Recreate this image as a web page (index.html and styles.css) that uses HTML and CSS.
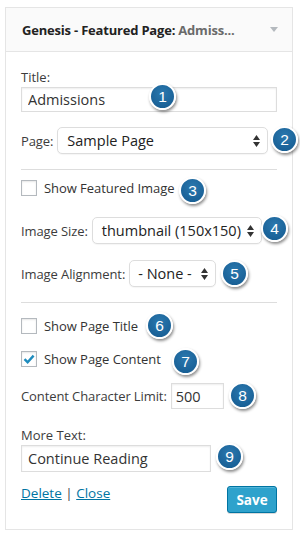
FILE: index.html
```html
<!DOCTYPE html>
<html>
<head>
<meta charset="utf-8">
<link rel="stylesheet" href="styles.css">
</head>
<body>
<div class="widget">
  <div class="widget-top">
    <span class="wt-title">Genesis - Featured Page:<span class="wt-sub"> Admiss...</span></span>
    <svg class="wt-arrow" width="8" height="6" viewBox="0 0 8 6"><path d="M0 0h8L4 5z" fill="#b4b9be"/></svg>
  </div>
  <div class="widget-inside">
    <div class="row r-title">
      <label class="lbl">Title:</label>
      <div class="field-wrap">
        <input class="txt wide" type="text" value="Admissions">
        <span class="badge b1">1</span>
      </div>
    </div>

    <div class="row inline r-page">
      <label class="lbl">Page:</label>
      <div class="sel s-page"><span>Sample Page</span><svg class="updn" width="7" height="12" viewBox="0 0 7 12"><path d="M3.5 0L7 5H0z M0 7h7L3.5 12z" fill="#333"/></svg></div>
      <span class="badge b2">2</span>
    </div>

    <hr class="sep sep1">

    <div class="row inline r-feat">
      <span class="cb"></span><span class="cbl">Show Featured Image</span>
      <span class="badge b3">3</span>
    </div>

    <div class="row inline r-size">
      <label class="lbl">Image Size:</label>
      <div class="sel s-size"><span>thumbnail (150x150)</span><svg class="updn" width="7" height="12" viewBox="0 0 7 12"><path d="M3.5 0L7 5H0z M0 7h7L3.5 12z" fill="#333"/></svg></div>
      <span class="badge b4">4</span>
    </div>

    <div class="row inline r-align">
      <label class="lbl">Image Alignment:</label>
      <div class="sel s-align"><span>- None -</span><svg class="updn" width="7" height="12" viewBox="0 0 7 12"><path d="M3.5 0L7 5H0z M0 7h7L3.5 12z" fill="#333"/></svg></div>
      <span class="badge b5">5</span>
    </div>

    <hr class="sep sep2">

    <div class="row inline r-ptitle">
      <span class="cb"></span><span class="cbl">Show Page Title</span>
      <span class="badge b6">6</span>
    </div>

    <div class="row inline r-pcontent">
      <span class="cb checked"><svg width="12" height="10" viewBox="0 0 12 10"><path d="M1.5 5.2L4.6 8.2L10.6 1.6" fill="none" stroke="#1e8cbe" stroke-width="2.4"/></svg></span><span class="cbl">Show Page Content</span>
      <span class="badge b7">7</span>
    </div>

    <div class="row inline r-limit">
      <label class="lbl">Content Character Limit:</label>
      <input class="txt small" type="text" value="500">
      <span class="badge b8">8</span>
    </div>

    <div class="row r-more">
      <label class="lbl">More Text:</label>
      <div class="field-wrap">
        <input class="txt more" type="text" value="Continue Reading">
        <span class="badge b9">9</span>
      </div>
    </div>

    <div class="controls">
      <div class="links"><a href="#">Delete</a> | <a href="#">Close</a></div>
      <button class="save">Save</button>
    </div>
  </div>
</div>
</body>
</html>
```

FILE: styles.css
```css
* { box-sizing: border-box; }
html, body { margin: 0; background: #fff; }
body {
  padding: 7px 0 0 5px;
  font-family: "Open Sans", "Liberation Sans", sans-serif;
  font-size: 13px;
  color: #333;
}
.widget {
  width: 288px;
  height: 523px;
  border: 1px solid #e5e5e5;
  background: #fff;
}
.widget-top {
  height: 44px;
  background: #fafafa;
  border-bottom: 1px solid #e5e5e5;
  display: flex;
  align-items: center;
  justify-content: space-between;
  padding: 0 14px 0 16px;
}
.wt-title {
  font-weight: 700;
  font-size: 13px;
  color: #222;
  letter-spacing: -0.2px;
}
.wt-sub { color: #6a6a6a; }
.wt-arrow { margin-top: 1px; }
.widget-inside {
  padding: 0 15px;
}
.row { position: relative; }
.lbl { display: block; color: #3c3c3c; line-height: 18px; }
.inline { display: flex; align-items: center; }
.inline .lbl { margin-right: 4px; letter-spacing: -0.1px; }
.field-wrap { position: relative; }
.txt {
  font-family: "Open Sans", "Liberation Sans", sans-serif;
  font-size: 14.5px;
  color: #333;
  border: 1px solid #ddd;
  box-shadow: inset 0 1px 2px rgba(0,0,0,0.07);
  background: #fff;
  height: 26px;
  padding: 0 6px;
  outline: none;
  border-radius: 0;
}
.wide { width: 256px; height: 25px; }
.small { width: 53px; padding: 0 4px; }
.more { width: 190px; height: 27px; }
.r-title { margin-top: 16px; }
.r-title .lbl { margin-bottom: 1px; }
.sel {
  position: relative;
  display: flex;
  align-items: center;
  height: 27px;
  border: 1px solid #ddd;
  border-radius: 5px;
  background: #fff;
  box-shadow: 0 1px 1px rgba(0,0,0,0.04);
  padding: 0 0 0 9px;
  font-size: 14.5px;
  color: #222;
}
.sel .updn { position: absolute; right: 7px; top: 7px; }
.s-page { width: 211px; }
.s-size { width: 170px; }
.s-align { width: 87px; padding-left: 8px; }
.r-page { margin-top: 15px; }
.sep {
  border: 0;
  border-top: 1px solid #ddd;
  margin: 0;
  height: 0;
}
.sep1 { margin-top: 15px; }
.cb {
  width: 16px; height: 16px;
  border: 1px solid #b4b9be;
  background: #fff;
  box-shadow: inset 0 1px 2px rgba(0,0,0,0.1);
  display: inline-flex;
  align-items: center;
  justify-content: center;
  margin-right: 7px;
  flex: none;
}
.cbl { font-size: 13px; color: #333; line-height: 18px; letter-spacing: -0.05px; }
.r-feat { margin-top: 9px; }
.r-size { margin-top: 20px; }
.r-align { margin-top: 16px; }
.sep2 { margin-top: 15px; }
.r-ptitle { margin-top: 14px; }
.r-pcontent { margin-top: 15px; }
.r-limit { margin-top: 15px; }
.r-more { margin-top: 17px; }
.r-more .lbl { margin-bottom: 1px; }
.badge {
  position: absolute;
  width: 27px; height: 27px;
  border-radius: 50%;
  background: radial-gradient(circle at 50% 35%, #2a78ae 0%, #1a6298 70%, #175a8c 100%);
  border: 2px solid #fff;
  box-shadow: 1px 2px 3px rgba(0,0,0,0.45);
  color: #fff;
  font-family: "Liberation Sans", "Open Sans", sans-serif;
  font-size: 15.5px;
  line-height: 23px;
  text-align: center;
}
.b1 { left: 128px; top: -4px; }
.b2 { left: 250px; top: -1px; }
.b3 { left: 158px; top: -2px; }
.b4 { left: 240px; top: -2px; }
.b5 { left: 200px; top: 0; }
.b6 { left: 125px; top: -5px; }
.b7 { left: 151px; top: -2px; }
.b8 { left: 208px; top: -1px; }
.b9 { left: 195px; top: -2px; }
.controls {
  display: flex;
  justify-content: space-between;
  align-items: flex-start;
  margin-top: 12px;
}
.links { color: #444; font-size: 13.5px; line-height: 18px; }
.links a { color: #0074a2; text-decoration: underline; }
.save {
  width: 50px;
  height: 27px;
  background: #2ea2cc;
  border: 1px solid #0074a2;
  border-radius: 3px;
  box-shadow: inset 0 1px 0 rgba(120,200,230,0.5), 0 1px 0 rgba(0,0,0,0.15);
  color: #fff;
  font-family: "Open Sans", "Liberation Sans", sans-serif;
  font-weight: 700;
  font-size: 13.5px;
  padding: 0;
  margin-top: 2px;
}
```
